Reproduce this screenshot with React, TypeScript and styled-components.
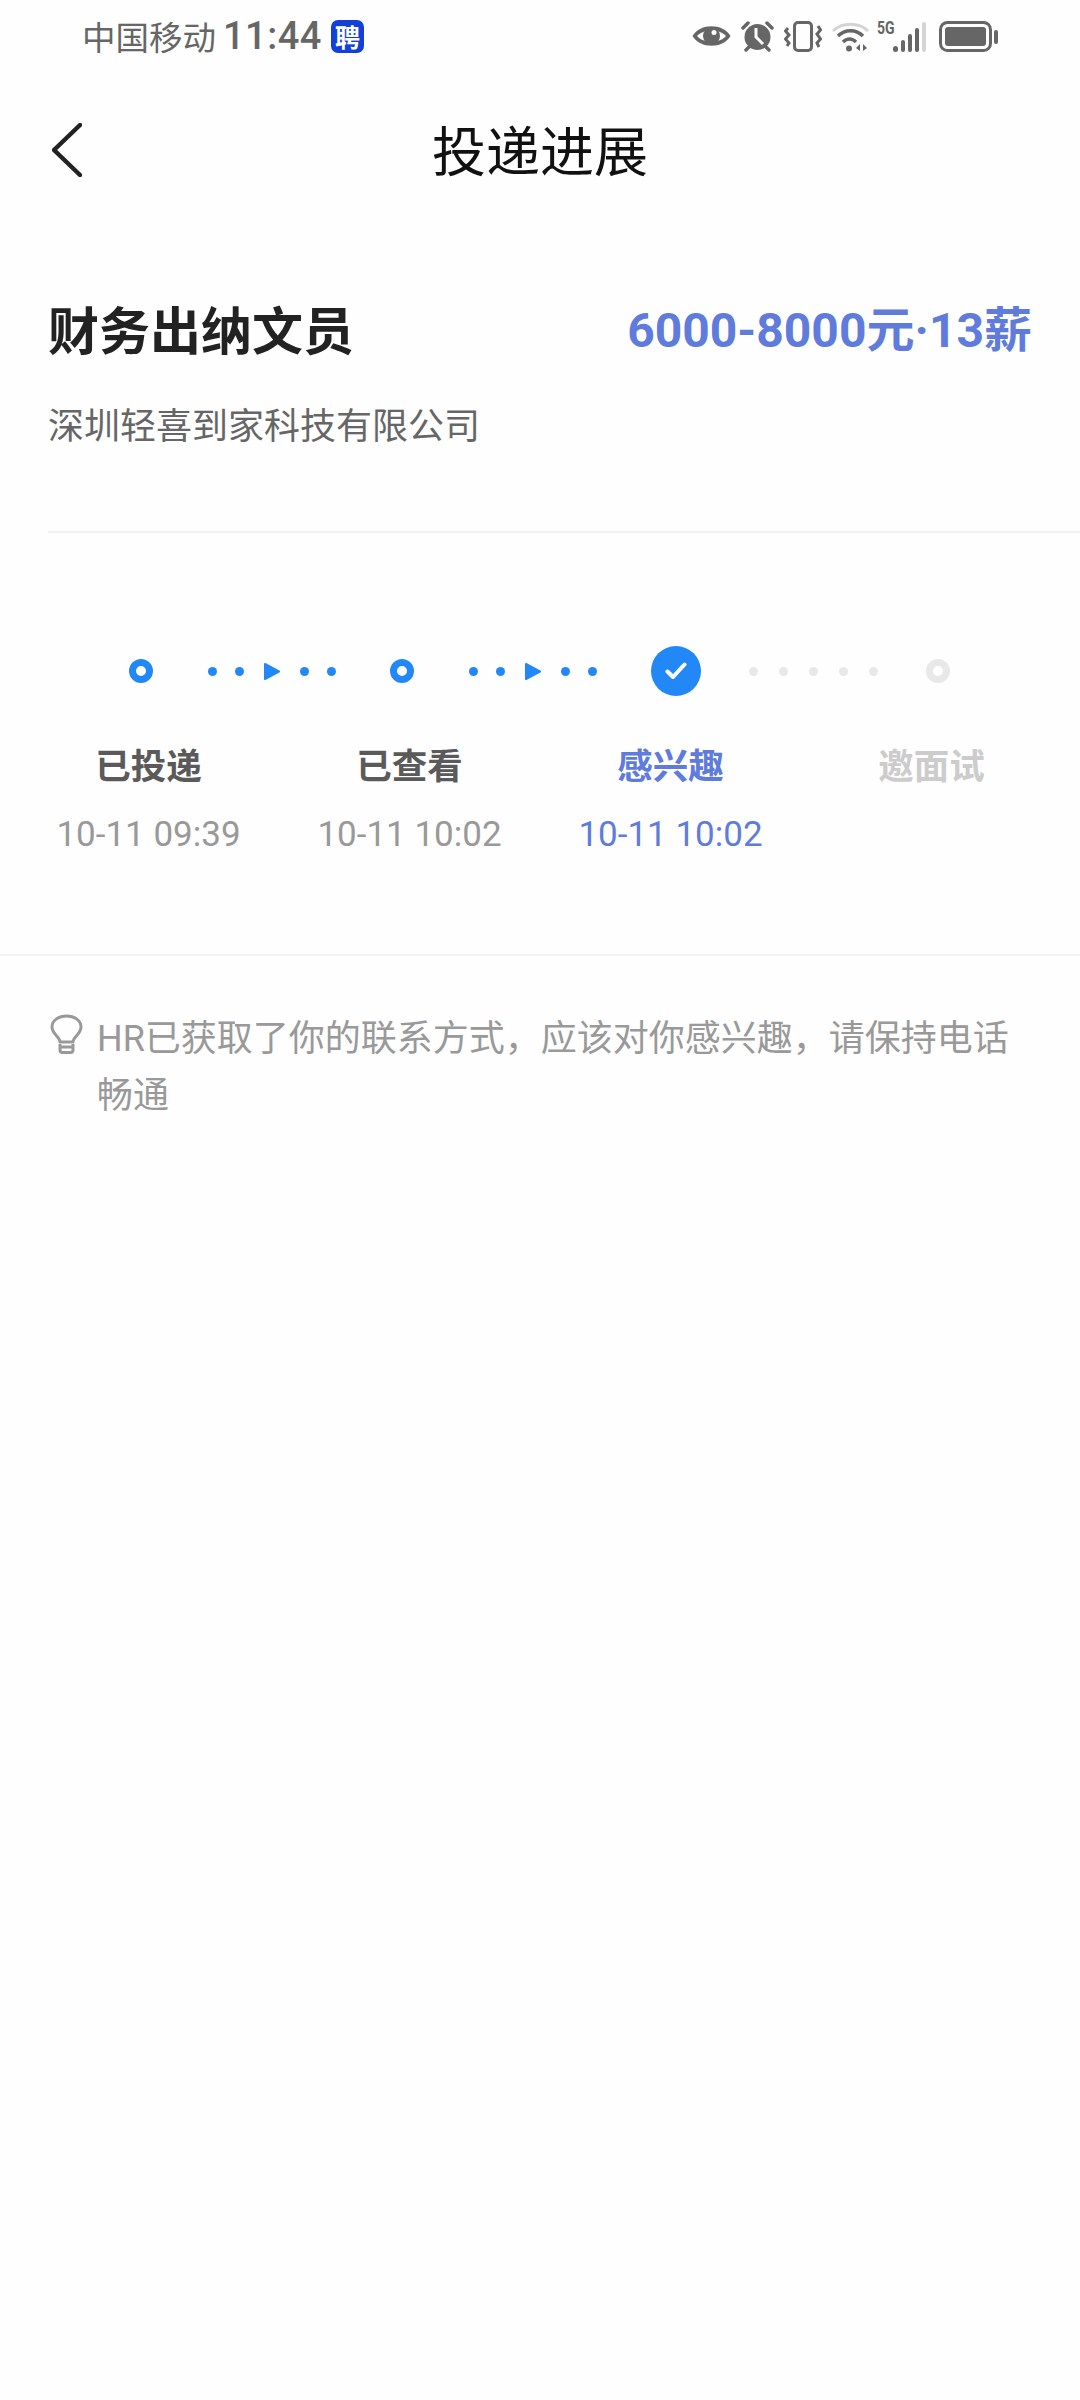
import React from 'react';
import styled, { createGlobalStyle } from 'styled-components';

const GlobalStyle = createGlobalStyle`
  html, body {
    margin: 0;
    padding: 0;
    background: #fefefe;
  }
  * {
    box-sizing: border-box;
  }
`;

const Page = styled.div`
  width: 1080px;
  height: 2400px;
  overflow: hidden;
  background: #fefefe;
  font-family: Roboto, "Noto Sans CJK SC", sans-serif;
`;

const StatusBar = styled.div`
  height: 72px;
  display: flex;
  align-items: center;
  padding: 0 82px;
  color: #666;
`;

const Carrier = styled.span`
  font-size: 33.5px;
  line-height: 40px;
  font-family: "Noto Sans CJK SC", sans-serif;
`;

const Clock = styled.span`
  margin-left: 7px;
  font-size: 38px;
  line-height: 40px;
  font-weight: 500;
  letter-spacing: 0.5px;
`;

const AppBadge = styled.span`
  margin-left: 9px;
  width: 33px;
  height: 33px;
  border-radius: 7px;
  background: #1240d8;
  color: #fff;
  font-size: 25px;
  line-height: 33px;
  font-weight: 700;
  text-align: center;
  font-family: "Noto Sans CJK SC", sans-serif;
`;

const StatusIcons = styled.div`
  margin-left: auto;
  display: flex;
  align-items: center;
  gap: 10px;
`;

const SignalGroup = styled.div`
  position: relative;
  width: 49px;
  height: 31px;
  margin-left: -2px;
  margin-right: 3px;
`;

const FiveG = styled.span`
  position: absolute;
  left: 0;
  top: -3px;
  font-size: 18px;
  line-height: 20px;
  font-weight: 700;
  transform: scaleX(0.78);
  transform-origin: left top;
  color: #666;
`;

const Nav = styled.div`
  height: 154px;
  display: grid;
  grid-template-columns: 1fr auto 1fr;
  align-items: center;
  padding: 0 52px;
`;

const BackIcon = styled.svg`
  width: 30px;
  height: 54px;
  margin-top: 2px;
`;

const NavTitle = styled.h1`
  margin: 0;
  font-size: 54px;
  line-height: 64px;
  font-weight: 400;
  color: #111;
  font-family: "Noto Sans CJK SC", sans-serif;
`;

const JobHeader = styled.section`
  margin-left: 48px;
  padding: 70px 48px 83px 0;
  border-bottom: 2px solid #f0f0f0;
`;

const JobRow = styled.div`
  display: flex;
  justify-content: space-between;
  align-items: center;
`;

const JobTitle = styled.h2`
  margin: 0;
  font-size: 51px;
  line-height: 64px;
  font-weight: 700;
  color: #222;
  font-family: "Noto Sans CJK SC", sans-serif;
`;

const Salary = styled.span`
  margin-top: 5px;
  font-size: 48px;
  line-height: 59px;
  font-weight: 700;
  color: #5f7cdc;
`;

const Company = styled.p`
  margin: 38px 0 0;
  font-size: 36px;
  line-height: 50px;
  color: #666;
  font-family: "Noto Sans CJK SC", sans-serif;
`;

const Progress = styled.section`
  padding: 113px 0 97px;
  border-bottom: 2px solid #f3f3f3;
`;

const Stepper = styled.div`
  display: flex;
  align-items: center;
  height: 50px;
  padding-left: 129px;
`;

const Ring = styled.span<{ $on: boolean }>`
  flex: none;
  width: 24px;
  height: 24px;
  border-radius: 50%;
  border: 7px solid ${({ $on }) => ($on ? '#2288f8' : '#e8e8e8')};
  background: #fff;
`;

const CheckNode = styled.span`
  flex: none;
  width: 50px;
  height: 50px;
  border-radius: 50%;
  background: #2288f8;
  display: flex;
  align-items: center;
  justify-content: center;
`;

const Link = styled.div<{ $width: number; $gap: number }>`
  flex: none;
  width: ${({ $width }) => $width}px;
  display: flex;
  align-items: center;
  justify-content: center;
  gap: ${({ $gap }) => $gap}px;
`;

const Dot = styled.span<{ $on: boolean }>`
  flex: none;
  width: 9px;
  height: 9px;
  border-radius: 50%;
  background: ${({ $on }) => ($on ? '#2288f8' : '#e8e8e8')};
`;

const Arrow = styled.svg`
  flex: none;
  width: 16px;
  height: 19px;
  margin: 0 2px;
`;

const Steps = styled.div`
  display: grid;
  grid-template-columns: repeat(4, 261px);
  padding-left: 18px;
  margin-top: 43px;
`;

const Step = styled.div`
  display: flex;
  flex-direction: column;
  align-items: center;
`;

const StepName = styled.span<{ $color: string }>`
  font-size: 35.5px;
  line-height: 50px;
  font-weight: 700;
  color: ${({ $color }) => $color};
  font-family: "Noto Sans CJK SC", sans-serif;
`;

const StepTime = styled.span<{ $color: string }>`
  margin-top: 24px;
  height: 44px;
  font-size: 35px;
  line-height: 44px;
  color: ${({ $color }) => $color};
`;

const Tip = styled.div`
  display: flex;
  align-items: flex-start;
  padding: 55px 60px 0 50px;
`;

const BulbIcon = styled.svg`
  flex: none;
  width: 33px;
  height: 40px;
  margin-top: 3px;
`;

const TipText = styled.p`
  margin: 0 0 0 14px;
  font-size: 36px;
  line-height: 57px;
  color: #999;
  font-family: Roboto, "Noto Sans CJK SC", sans-serif;
`;

const steps = [
  { name: '已投递', time: '10-11 09:39', nameColor: '#5a5a5a', timeColor: '#999' },
  { name: '已查看', time: '10-11 10:02', nameColor: '#5a5a5a', timeColor: '#999' },
  { name: '感兴趣', time: '10-11 10:02', nameColor: '#5f7cdc', timeColor: '#5f7cdc' },
  { name: '邀面试', time: '', nameColor: '#ccc', timeColor: '#ccc' },
];

const ActiveLink = () => (
  <Link $width={237} $gap={18}>
    <Dot $on />
    <Dot $on />
    <Arrow viewBox="0 0 16 19">
      <path d="M1 2 L15 9.5 L1 17 Z" fill="#2288f8" stroke="#2288f8" strokeWidth="2" strokeLinejoin="round" />
    </Arrow>
    <Dot $on />
    <Dot $on />
  </Link>
);

const App: React.FC = () => {
  return (
    <Page>
      <GlobalStyle />
      <StatusBar>
        <Carrier>中国移动</Carrier>
        <Clock>11:44</Clock>
        <AppBadge>聘</AppBadge>
        <StatusIcons>
          <svg width="39" height="24" viewBox="0 0 39 24">
            <path d="M0.5 12 C8 -1 31 -1 38.5 12 C31 25 8 25 0.5 12 Z" fill="#666" />
            <path d="M5 12 C11 4.5 28 4.5 34 12 C28 19.5 11 19.5 5 12 Z" fill="#fefefe" />
            <circle cx="19.5" cy="12" r="8.5" fill="#666" />
            <circle cx="22" cy="8.5" r="2.5" fill="#fefefe" />
          </svg>
          <svg width="33" height="31" viewBox="0 0 33 31">
            <circle cx="16.5" cy="16" r="13" fill="#666" />
            <path d="M15 7 V16 L22 23" fill="none" stroke="#fefefe" strokeWidth="3" />
            <path d="M2 7 L7 2 M31 7 L26 2" stroke="#666" strokeWidth="3.5" strokeLinecap="round" />
            <path d="M5 29 L8 26 M28 29 L25 26" stroke="#666" strokeWidth="3.5" strokeLinecap="round" />
          </svg>
          <svg width="38" height="31" viewBox="0 0 38 31">
            <rect x="10.5" y="1.5" width="17" height="28" rx="3.5" fill="none" stroke="#666" strokeWidth="3" />
            <path d="M4 7 L1.5 10 L5 14 L1.5 18 L5 22 L3 25" fill="none" stroke="#666" strokeWidth="3" />
            <path d="M34 5 L36.5 9 L33 13 L36.5 18 L33 22 L35 26" fill="none" stroke="#666" strokeWidth="3" />
          </svg>
          <svg width="37" height="31" viewBox="0 0 37 31">
            <path d="M1 10 C10 1 27 1 36 10" fill="none" stroke="#d4d4d4" strokeWidth="3" />
            <path d="M6 15 C13 8 24 8 31 15" fill="none" stroke="#666" strokeWidth="3.5" />
            <path d="M11 21 C15 17 20 17 24 21" fill="none" stroke="#666" strokeWidth="3.5" />
            <circle cx="17" cy="27.5" r="3" fill="#666" />
            <path d="M28 23 V30 L24 27 Z M31 23 V30 L35 27 Z" fill="#666" />
          </svg>
          <SignalGroup>
            <FiveG>5G</FiveG>
            <svg width="49" height="31" viewBox="0 0 49 31">
              <rect x="16" y="25" width="5" height="6" rx="2.5" fill="#666" />
              <rect x="24" y="19" width="4" height="12" rx="2" fill="#666" />
              <rect x="31" y="13" width="4" height="18" rx="2" fill="#666" />
              <rect x="38" y="7" width="4" height="24" rx="2" fill="#666" />
              <rect x="45" y="1" width="4" height="30" rx="2" fill="#d4d4d4" />
            </svg>
          </SignalGroup>
          <svg width="59" height="31" viewBox="0 0 59 31">
            <rect x="1.5" y="1.5" width="50" height="28" rx="7" fill="none" stroke="#666" strokeWidth="3" />
            <rect x="6" y="6" width="41" height="19" rx="3" fill="#666" />
            <rect x="55" y="9" width="4" height="14" rx="2" fill="#666" />
          </svg>
        </StatusIcons>
      </StatusBar>

      <Nav>
        <BackIcon viewBox="0 0 30 54">
          <path d="M28 2 L2 27 L28 52" fill="none" stroke="#222" strokeWidth="4.5" strokeLinecap="round" strokeLinejoin="round" />
        </BackIcon>
        <NavTitle>投递进展</NavTitle>
        <span />
      </Nav>

      <JobHeader>
        <JobRow>
          <JobTitle>财务出纳文员</JobTitle>
          <Salary>6000-8000元·13薪</Salary>
        </JobRow>
        <Company>深圳轻喜到家科技有限公司</Company>
      </JobHeader>

      <Progress>
        <Stepper>
          <Ring $on />
          <ActiveLink />
          <Ring $on />
          <ActiveLink />
          <CheckNode>
            <svg width="22" height="18" viewBox="0 0 22 18">
              <path d="M2.5 9.5 L8 15 L19.5 2.5" fill="none" stroke="#fff" strokeWidth="4" strokeLinecap="round" strokeLinejoin="round" />
            </svg>
          </CheckNode>
          <Link $width={225} $gap={21}>
            {[0, 1, 2, 3, 4].map((i) => (
              <Dot key={i} $on={false} />
            ))}
          </Link>
          <Ring $on={false} />
        </Stepper>
        <Steps>
          {steps.map((s) => (
            <Step key={s.name}>
              <StepName $color={s.nameColor}>{s.name}</StepName>
              <StepTime $color={s.timeColor}>{s.time}</StepTime>
            </Step>
          ))}
        </Steps>
      </Progress>

      <Tip>
        <BulbIcon viewBox="0 0 33 40">
          <path d="M10 28 C10 23 2 20 2 13 C2 6 9 2 16.5 2 C24 2 31 6 31 13 C31 20 23 23 23 28 Z" fill="none" stroke="#999" strokeWidth="3" strokeLinejoin="round" />
          <path d="M10 30 V36 C10 37.5 11 38.5 12.5 38.5 H20.5 C22 38.5 23 37.5 23 36 V30" fill="none" stroke="#999" strokeWidth="3" />
          <path d="M10 33 H23" stroke="#999" strokeWidth="3" />
        </BulbIcon>
        <TipText>HR已获取了你的联系方式，应该对你感兴趣，请保持电话畅通</TipText>
      </Tip>
    </Page>
  );
};

export default App;
